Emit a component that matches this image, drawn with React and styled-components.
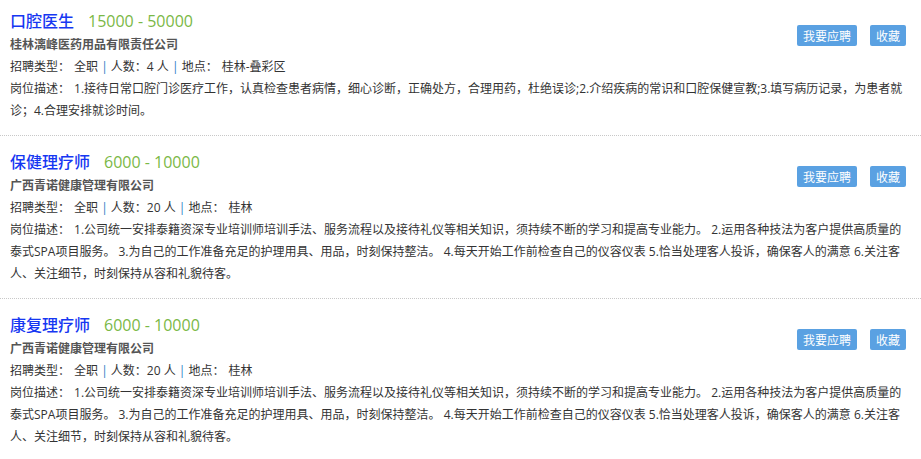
import React from 'react';
import styled, { createGlobalStyle } from 'styled-components';

const GlobalStyle = createGlobalStyle`
  body {
    margin: 0;
    background: #fff;
    font-family: "Open Sans", "Noto Sans CJK SC", sans-serif;
    color: #333;
  }
`;

const List = styled.div`
  width: 921px;
`;

const Item = styled.div`
  padding: 12px 15px 13px 10px;
  border-bottom: 1px dotted #c8c8c8;

  &:first-child {
    padding-top: 7px;
  }
`;

const Actions = styled.div`
  float: right;
  display: flex;
  gap: 13px;
  margin-top: 18px;
`;

const Button = styled.button`
  height: 21px;
  padding: 0 6px;
  border: none;
  border-radius: 2px;
  background: #5aa1e2;
  color: #fff;
  font-family: "Noto Sans CJK SC", sans-serif;
  font-size: 12px;
  line-height: 21px;
  cursor: pointer;
`;

const TitleRow = styled.div`
  display: flex;
  align-items: baseline;
  gap: 14px;
  line-height: 26px;
`;

const Title = styled.a`
  color: #1637f2;
  font-size: 16px;
  font-weight: 500;
  font-family: "Noto Sans CJK SC", sans-serif;
  text-decoration: none;
`;

const Salary = styled.span`
  color: #7ab846;
  font-size: 16px;
`;

const Company = styled.div`
  font-size: 12px;
  font-weight: bold;
  color: #555;
  line-height: 22px;
`;

const Line = styled.div`
  font-size: 12px;
  line-height: 22px;
  color: #333;
`;

const Label = styled.span`
  margin-right: 4px;
`;

const Sep = styled.span`
  color: #2a7ac4;
`;

const jobs = [
  {
    id: 1,
    title: '口腔医生',
    salary: '15000 - 50000',
    company: '桂林漓峰医药用品有限责任公司',
    count: 4,
    place: '桂林-叠彩区',
    desc: '1.接待日常口腔门诊医疗工作，认真检查患者病情，细心诊断，正确处方，合理用药，杜绝误诊;2.介绍疾病的常识和口腔保健宣教;3.填写病历记录，为患者就诊；4.合理安排就诊时间。',
  },
  {
    id: 2,
    title: '保健理疗师',
    salary: '6000 - 10000',
    company: '广西青诺健康管理有限公司',
    count: 20,
    place: '桂林',
    desc: '1.公司统一安排泰籍资深专业培训师培训手法、服务流程以及接待礼仪等相关知识，须持续不断的学习和提高专业能力。 2.运用各种技法为客户提供高质量的泰式SPA项目服务。 3.为自己的工作准备充足的护理用具、用品，时刻保持整洁。 4.每天开始工作前检查自己的仪容仪表 5.恰当处理客人投诉，确保客人的满意 6.关注客人、关注细节，时刻保持从容和礼貌待客。',
  },
  {
    id: 3,
    title: '康复理疗师',
    salary: '6000 - 10000',
    company: '广西青诺健康管理有限公司',
    count: 20,
    place: '桂林',
    desc: '1.公司统一安排泰籍资深专业培训师培训手法、服务流程以及接待礼仪等相关知识，须持续不断的学习和提高专业能力。 2.运用各种技法为客户提供高质量的泰式SPA项目服务。 3.为自己的工作准备充足的护理用具、用品，时刻保持整洁。 4.每天开始工作前检查自己的仪容仪表 5.恰当处理客人投诉，确保客人的满意 6.关注客人、关注细节，时刻保持从容和礼貌待客。',
  },
];

const JobItem = ({ job }) => (
  <Item>
    <Actions>
      <Button>我要应聘</Button>
      <Button>收藏</Button>
    </Actions>
    <TitleRow>
      <Title href="#">{job.title}</Title>
      <Salary>{job.salary}</Salary>
    </TitleRow>
    <Company>{job.company}</Company>
    <Line>
      <Label>招聘类型：</Label>全职 <Sep>|</Sep> 人数：{job.count} 人 <Sep>|</Sep> <Label>地点：</Label>{job.place}
    </Line>
    <Line>
      <Label>岗位描述：</Label>{job.desc}
    </Line>
  </Item>
);

const App = () => (
  <>
    <GlobalStyle />
    <List>
      {jobs.map((job) => (
        <JobItem key={job.id} job={job} />
      ))}
    </List>
  </>
);

export default App;
